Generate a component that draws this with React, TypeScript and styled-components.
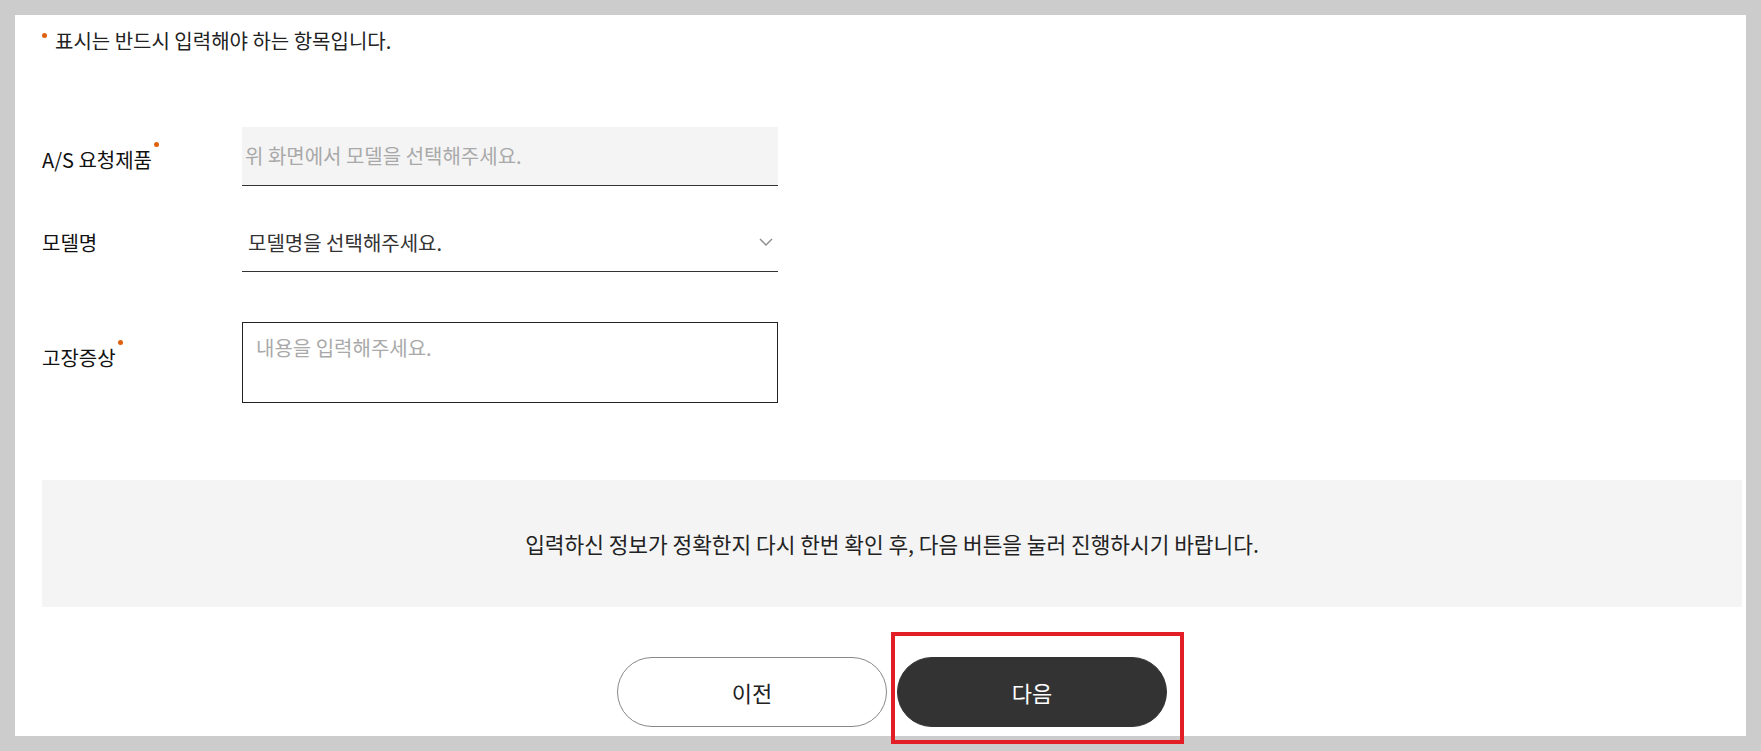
import React from 'react';
import styled, {createGlobalStyle} from 'styled-components';

const GlobalStyle = createGlobalStyle`
    html, body {
        margin: 0;
        padding: 0;
        background: #cccccc;
    }
    body {
        font-family: "Noto Sans CJK KR", "Noto Sans", sans-serif;
        color: #222;
    }
    * {
        box-sizing: border-box;
    }
`;

const Page = styled.div`
    position: relative;
    padding: 15px;
    width: 1761px;
    height: 751px;
    overflow: hidden;
`;

const Panel = styled.div`
    background: #fff;
    height: 721px;
    padding: 12px 4px 0 27px;
    overflow: hidden;
`;

const RequiredDot = styled.span`
    display: inline-block;
    width: 5px;
    height: 5px;
    border-radius: 50%;
    background: #e0600c;
`;

const Note = styled.p`
    margin: 0;
    font-size: 20px;
    line-height: 27px;
    color: #222;
    display: flex;
    align-items: center;
    gap: 8px;

    ${RequiredDot} {
        margin-top: -11px;
    }
`;

const Form = styled.div`
    margin-top: 73px;
    display: flex;
    flex-direction: column;
`;

const Row = styled.div<{$gap: number; $top?: boolean}>`
    display: flex;
    align-items: ${(props) => (props.$top ? 'flex-start' : 'center')};
    margin-top: ${(props) => props.$gap}px;
`;

const Label = styled.div<{$pad?: number}>`
    width: 200px;
    flex-shrink: 0;
    font-size: 20px;
    line-height: 29px;
    color: #111;
    padding-top: ${(props) => props.$pad || 0}px;

    ${RequiredDot} {
        vertical-align: top;
        margin: -3px 0 0 2px;
    }
`;

const fieldFont = `
    font-family: "Noto Sans CJK KR", "Noto Sans", sans-serif;
    font-size: 20px;
    line-height: 27px;
`;

const ReadOnlyInput = styled.input`
    ${fieldFont}
    width: 536px;
    height: 59px;
    border: 0;
    border-bottom: 1px solid #333;
    background: #f4f4f4;
    padding: 0 5px 2px 3px;
    outline: none;
    color: #333;

    &::placeholder {
        color: #a9a9a9;
    }
`;

const SelectBox = styled.div`
    ${fieldFont}
    width: 536px;
    height: 59px;
    border-bottom: 1px solid #333;
    padding: 0 5px 0 6px;
    display: flex;
    align-items: center;
    justify-content: space-between;
    color: #333;
`;

const TextArea = styled.textarea`
    ${fieldFont}
    width: 536px;
    height: 81px;
    border: 1px solid #222;
    padding: 11px 13px;
    resize: none;
    outline: none;
    display: block;

    &::placeholder {
        color: #a9a9a9;
    }
`;

const InfoBox = styled.div`
    margin-top: 77px;
    height: 127px;
    background: #f4f4f4;
    display: flex;
    align-items: center;
    justify-content: center;
    font-size: 21.4px;
    color: #222;
`;

const ButtonRow = styled.div`
    margin-top: 50px;
    display: flex;
    justify-content: center;
    gap: 10px;
`;

const Button = styled.button<{$primary?: boolean}>`
    width: 270px;
    height: 70px;
    border-radius: 35px;
    font-family: "Noto Sans CJK KR", "Noto Sans", sans-serif;
    font-size: 22px;
    cursor: pointer;
    border: 1px solid ${(props) => (props.$primary ? '#333' : '#888')};
    background: ${(props) => (props.$primary ? '#333' : '#fff')};
    color: ${(props) => (props.$primary ? '#fff' : '#222')};
`;

const Highlight = styled.div`
    position: absolute;
    left: 891px;
    top: 632px;
    width: 293px;
    height: 112px;
    border: 4px solid #e31e26;
    pointer-events: none;
`;

const Chevron = () => (
    <svg width='14' height='8' viewBox='0 0 14 8' fill='none'>
        <polyline
            points='1,1 7,7 13,1'
            stroke='#8a8a8a'
            strokeWidth='1.4'
        />
    </svg>
);

export default function App() {
    return (
        <Page>
            <GlobalStyle/>
            <Panel>
                <Note>
                    <RequiredDot/>
                    {'표시는 반드시 입력해야 하는 항목입니다.'}
                </Note>
                <Form>
                    <Row $gap={0}>
                        <Label $pad={6}>
                            {'A/S 요청제품'}
                            <RequiredDot/>
                        </Label>
                        <ReadOnlyInput
                            readOnly={true}
                            placeholder='위 화면에서 모델을 선택해주세요.'
                        />
                    </Row>
                    <Row $gap={27}>
                        <Label>{'모델명'}</Label>
                        <SelectBox>
                            <span>{'모델명을 선택해주세요.'}</span>
                            <Chevron/>
                        </SelectBox>
                    </Row>
                    <Row
                        $gap={50}
                        $top={true}
                    >
                        <Label $pad={21}>
                            {'고장증상'}
                            <RequiredDot/>
                        </Label>
                        <TextArea placeholder='내용을 입력해주세요.'/>
                    </Row>
                </Form>
                <InfoBox>
                    {'입력하신 정보가 정확한지 다시 한번 확인 후, 다음 버튼을 눌러 진행하시기 바랍니다.'}
                </InfoBox>
                <ButtonRow>
                    <Button>{'이전'}</Button>
                    <Button $primary={true}>{'다음'}</Button>
                </ButtonRow>
            </Panel>
            <Highlight/>
        </Page>
    );
}
